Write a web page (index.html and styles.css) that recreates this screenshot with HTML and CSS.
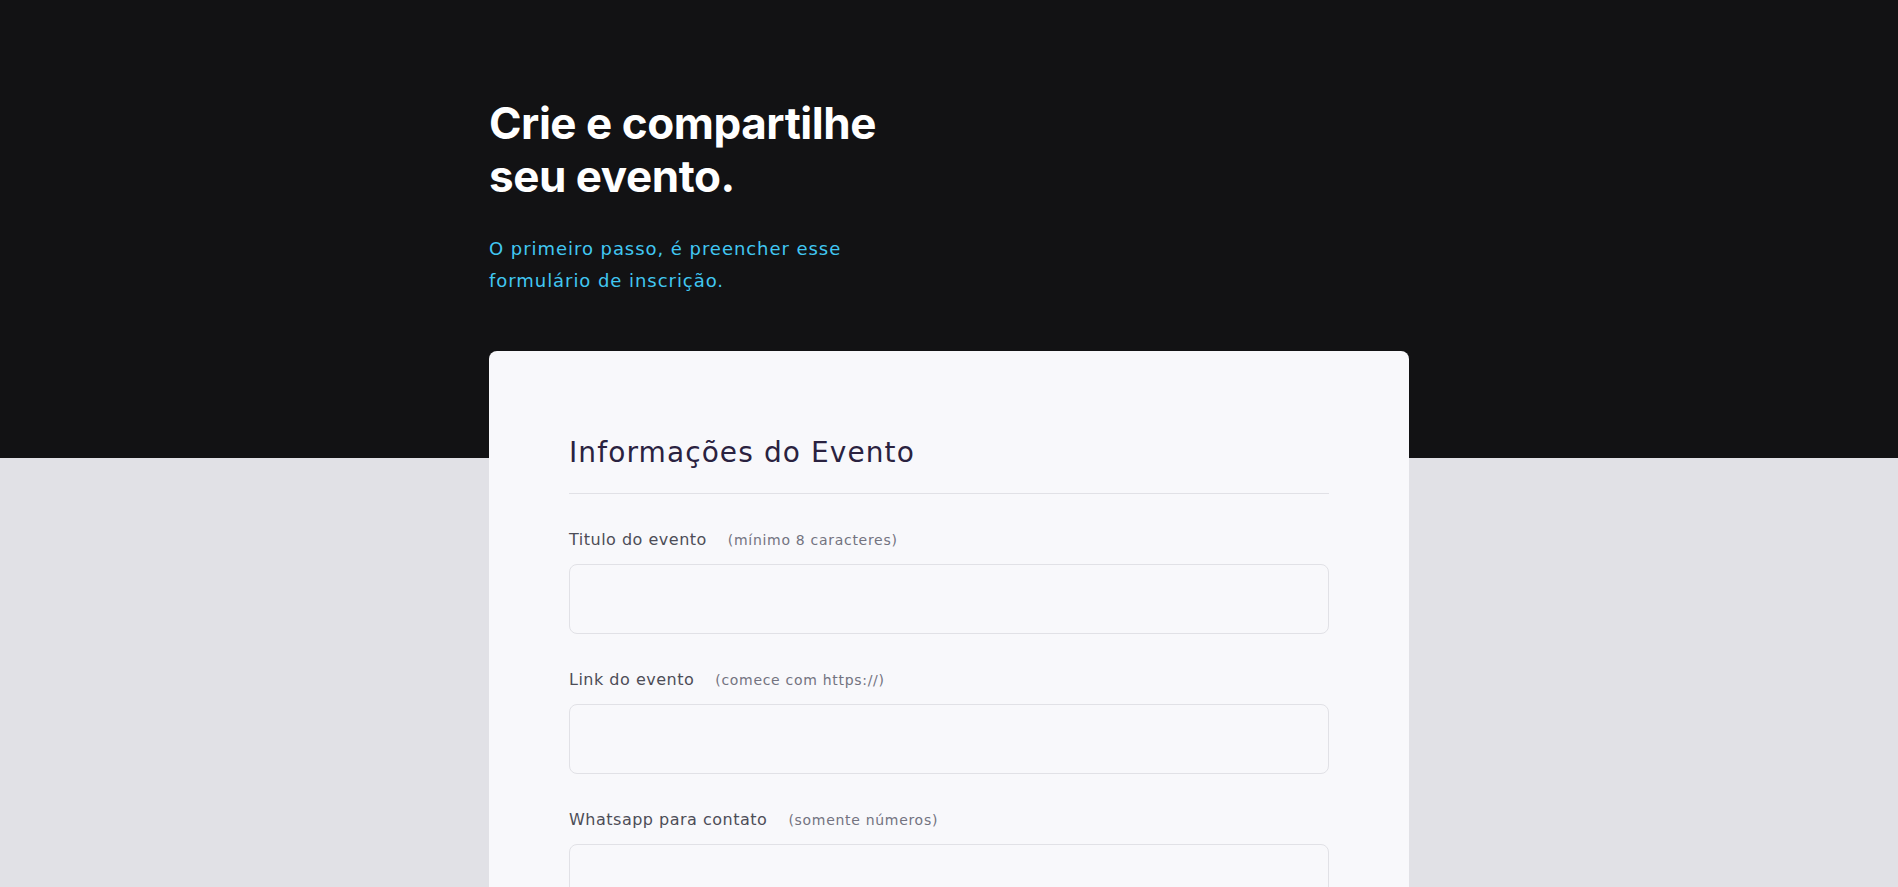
FILE: index.html
```html
<!DOCTYPE html>
<html lang="pt-BR">
<head>
<meta charset="utf-8">
<title>Crie e compartilhe seu evento</title>
<link rel="stylesheet" href="styles.css">
</head>
<body>
<header class="hero">
  <div class="container">
    <h1 class="hero-title">Crie e compartilhe seu evento.</h1>
    <p class="hero-sub">O primeiro passo, é preencher esse formulário de inscrição.</p>
  </div>
</header>
<main class="container main">
  <form class="card">
    <fieldset class="group">
      <legend class="group-title">Informações do Evento</legend>
      <div class="field">
        <label class="label" for="title">Titulo do evento<span class="hint">(mínimo 8 caracteres)</span></label>
        <input class="input" id="title" type="text">
      </div>
      <div class="field">
        <label class="label" for="link">Link do evento<span class="hint">(comece com https://)</span></label>
        <input class="input" id="link" type="url">
      </div>
      <div class="field">
        <label class="label" for="phone">Whatsapp para contato<span class="hint">(somente números)</span></label>
        <input class="input" id="phone" type="tel">
      </div>
    </fieldset>
  </form>
</main>
</body>
</html>
```
FILE: styles.css
```css
* { box-sizing: border-box; }
body {
  margin: 0;
  background: #e1e1e6;
  font-family: "DejaVu Sans", "Open Sans", sans-serif;
}
.container {
  width: 920px;
  margin: 0 auto;
}
.hero {
  background: #121214;
  height: 458px;
  padding-top: 97px;
}
.hero-title {
  margin: 0;
  width: 420px;
  font-family: Inter, "Liberation Sans", sans-serif;
  font-weight: 700;
  font-size: 44px;
  line-height: 53px;
  color: #ffffff;
  letter-spacing: -0.45px;
}
.hero-sub {
  margin: 30px 0 0;
  width: 380px;
  font-size: 18px;
  line-height: 32px;
  letter-spacing: 0.95px;
  color: #41c7f2;
}
.main {
  margin-top: -107px;
}
.card {
  background: #f8f8fb;
  border-radius: 8px;
  padding: 82px 80px 80px;
}
.group {
  border: 0;
  margin: 0;
  padding: 0;
  min-width: 0;
}
.group-title {
  display: block;
  width: 100%;
  padding: 0 0 20px;
  border-bottom: 1px solid #e1e1e6;
  font-size: 28px;
  line-height: 40px;
  letter-spacing: 1.1px;
  font-weight: 400;
  color: #2a2240;
}
.field {
  margin-top: 34px;
}
.label {
  display: block;
  font-size: 16px;
  line-height: 24px;
  letter-spacing: 0.5px;
  color: #4d4d57;
}
.hint {
  margin-left: 21px;
  font-size: 14px;
  letter-spacing: 0.7px;
  color: #737380;
}
.input {
  display: block;
  width: 100%;
  height: 70px;
  margin-top: 12px;
  background: #f8f8fb;
  border: 1px solid #e1e1e6;
  border-radius: 8px;
  font: inherit;
}
```
